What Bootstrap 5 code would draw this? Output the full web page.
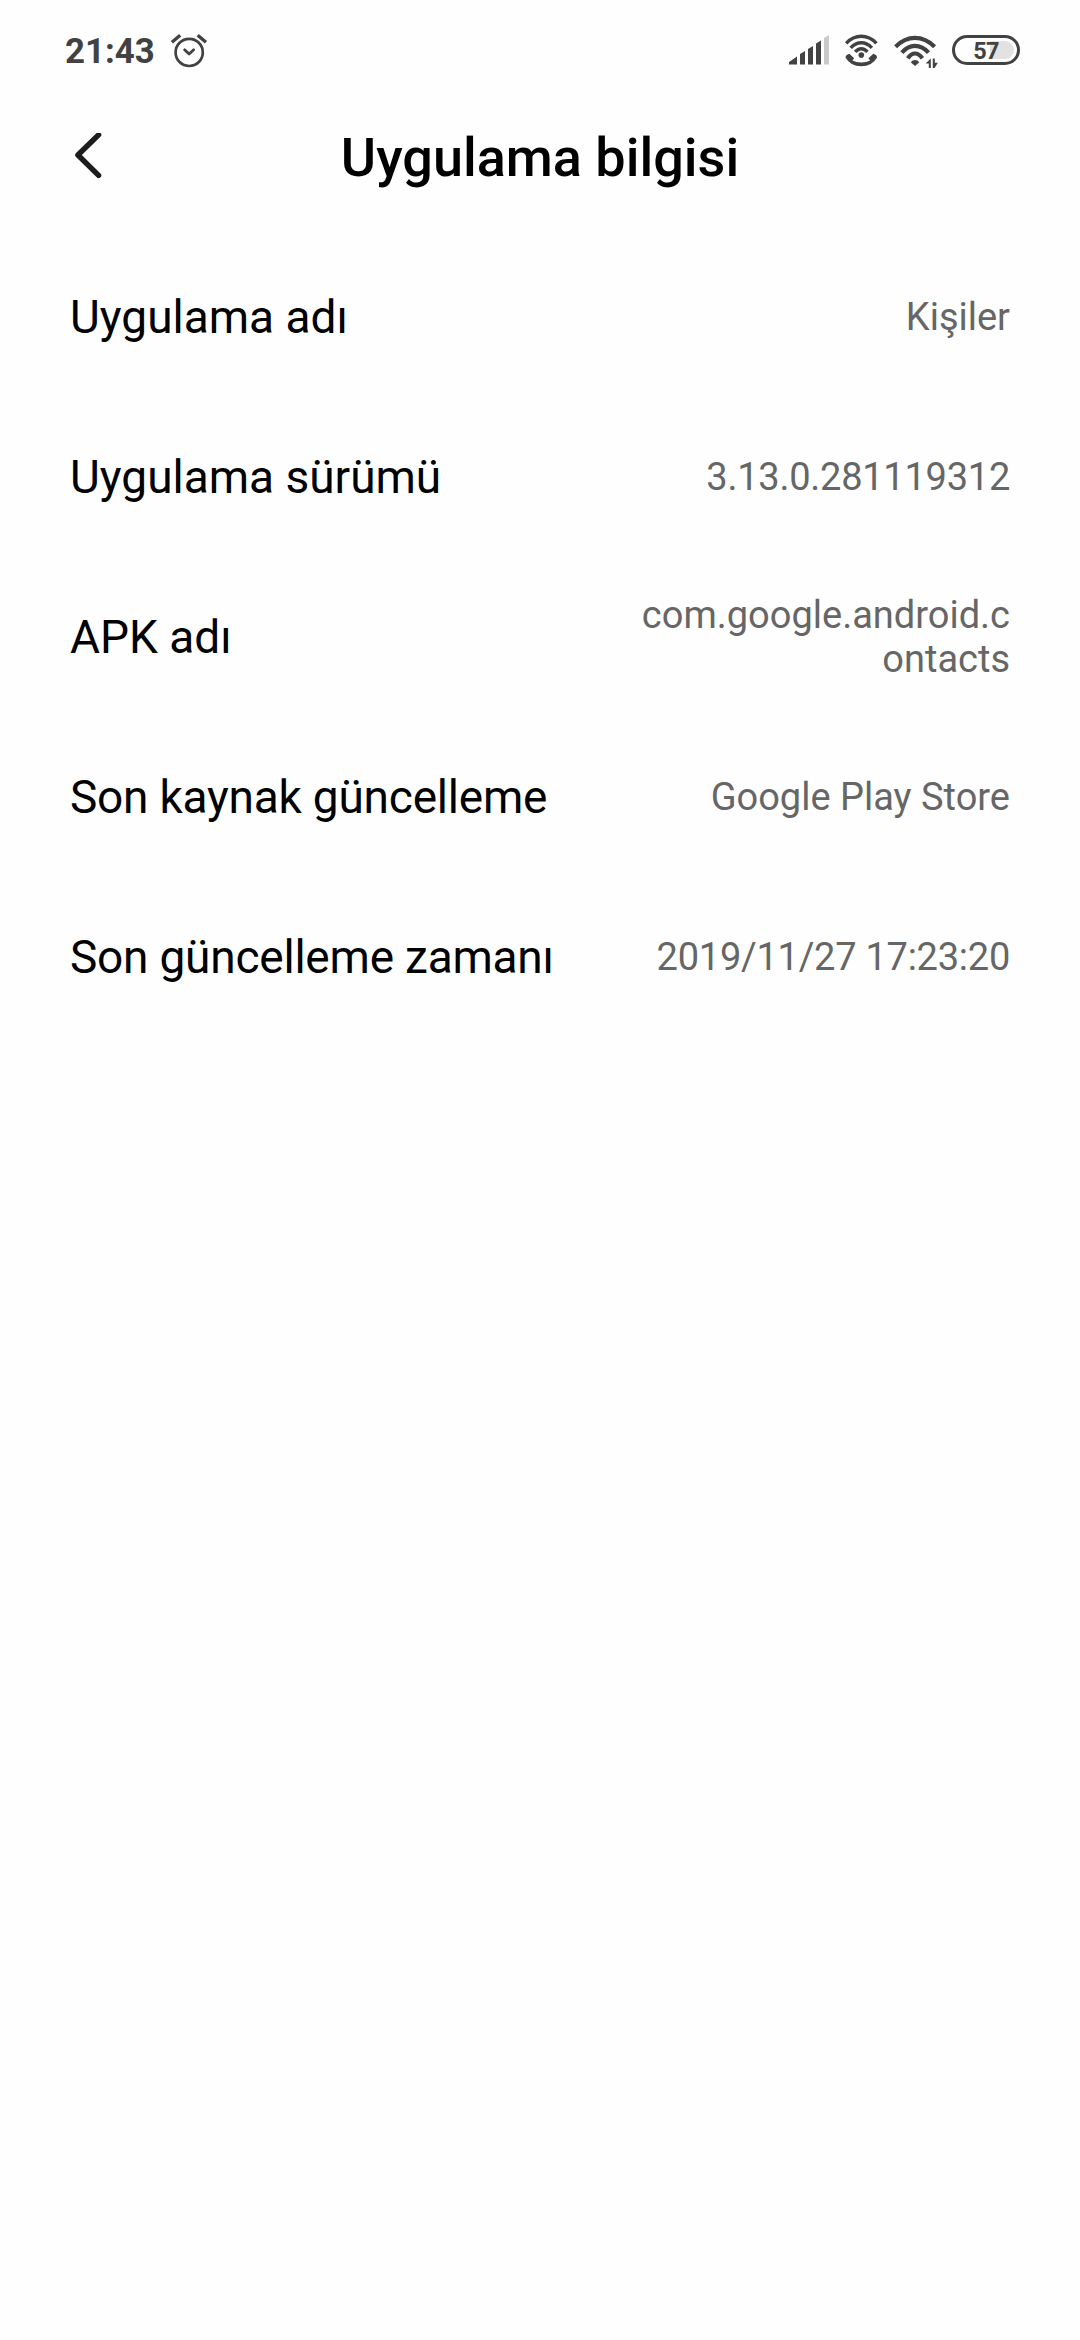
<!DOCTYPE html>
<html lang="tr">
<head>
<meta charset="utf-8">
<meta name="viewport" content="width=device-width, initial-scale=1">
<title>Uygulama bilgisi</title>
<link href="https://cdn.jsdelivr.net/npm/bootstrap@5.3.0/dist/css/bootstrap.min.css" rel="stylesheet">
<style>
  body { font-family: Roboto, "Noto Sans", sans-serif; background: #fefefe; color: #000; min-height: 2340px; }
  svg { display: block; flex: none; }
  .status-bar { height: 103px; padding: 0 60px 0 65px; color: #424242; }
  .clock { font-size: 34.8px; font-weight: 700; line-height: 1; width: 105px; }
  .battery { width: 68px; height: 30px; border: 3px solid #424242; border-radius: 15px; padding: 3px 3px; margin-top: -3px; }
  .battery-level { border-radius: 9px; background: linear-gradient(90deg, transparent 57%, #e2e2e2 57%); font-size: 23.5px; font-weight: 700; line-height: 20px; letter-spacing: -.8px; padding-top: 2px; }
  .title-bar { height: 110px; padding: 0 70px; }
  .title-bar h1 { font-size: 54px; font-weight: 500; line-height: 64px; padding-right: 32px; }
  .details { padding-top: 24px; }
  .detail-row { height: 160px; padding: 0 70px; }
  .detail-label { font-size: 46px; line-height: 54px; white-space: nowrap; }
  .detail-value { font-size: 38px; line-height: 44px; color: #666; width: 370px; word-break: break-all; }
  .snug { letter-spacing: -.22px; }
  .digits { letter-spacing: -.25px; }
</style>
</head>
<body>
<div class="status-bar d-flex align-items-center justify-content-between">
  <div class="d-flex align-items-center">
    <span class="clock">21:43</span>
    <svg width="38" height="36" viewBox="170 33.5 38 36" fill="none" stroke="currentColor" stroke-width="2.7" stroke-linecap="round" stroke-linejoin="round">
      <circle cx="189.2" cy="51.9" r="13.6"/>
      <path d="M184.6 49.3l4.5 4.2 4.6-4.2"/>
      <path stroke-width="3.4" stroke-linecap="butt" d="M171.9 41.8l8.3-7M206 41.8l-8.3-7"/>
    </svg>
  </div>
  <div class="d-flex align-items-center">
    <svg width="164" height="40" viewBox="788 31.5 164 40" fill="none" stroke="currentColor" stroke-linecap="butt">
      <!-- signal strength -->
      <g fill="currentColor" stroke="none">
        <path d="M789 61.5l8-5.5v8h-8zM800 53.5l5-3V64h-5zM808 48.5l5-3V64h-5zM816 43l5-3V64h-5z"/>
        <path fill="#cacaca" d="M824 37.5l5-3V64h-5z"/>
      </g>
      <!-- call over Wi-Fi -->
      <g stroke-width="3.4">
        <path d="M846.2 42.8Q852.8 35.8 861.3 35.8T876.4 42.8"/>
        <path d="M850.7 47.3Q855.3 42.2 861.3 42.2T871.9 47.3"/>
        <path d="M855.2 51.4Q857.8 48.2 861.3 48.2T867.4 51.4"/>
      </g>
      <circle cx="861.3" cy="54.6" r="2.8" fill="currentColor" stroke="none"/>
      <path fill="currentColor" stroke="none" d="M849.3 53.2l4.9 4.5-1.8 2.2q3.8 2 8.9 2t8.9-2l-1.8-2.2 4.9-4.5q3.7 1.4 3.8 3.7-5 8.8-15.8 8.8t-15.8-8.8q.1-2.3 3.8-3.7z"/>
      <!-- Wi-Fi -->
      <g stroke-width="4.2">
        <path d="M895.6 46.2Q904.3 37.3 915 37.3T934.6 46.2"/>
        <path d="M901.9 52.2Q907.5 45.4 915 45.4T928.5 52.2"/>
        <path d="M907.8 57.8Q910.9 53 915 53T922.4 57.8"/>
      </g>
      <path fill="currentColor" stroke="none" d="M910.7 61.8q1.6-2.3 4.3-2.3t4.3 2.3L915 65.6z"/>
      <path fill="currentColor" stroke="none" d="M930.8 58v9.4h-2v-4.5h-3.2zM932.8 58h2v4.2h3l-3.2 5.2h-1.8z"/>
    </svg>
    <div class="battery"><div class="battery-level h-100 d-flex align-items-center justify-content-center">57</div></div>
  </div>
</div>

<header class="title-bar d-flex align-items-center">
  <svg width="32" height="50" viewBox="70 133 32 50" fill="none" stroke="#1c1c1e" stroke-width="5.4" stroke-linecap="round" stroke-linejoin="round" role="img" aria-label="Geri">
    <path d="M98.6 134.8L77.9 155l20.7 20.4"/>
  </svg>
  <h1 class="flex-grow-1 text-center m-0">Uygulama bilgisi</h1>
</header>

<main class="details">
  <div class="detail-row d-flex align-items-center justify-content-between">
    <div class="detail-label">Uygulama adı</div>
    <div class="detail-value text-end">Kişiler</div>
  </div>
  <div class="detail-row d-flex align-items-center justify-content-between">
    <div class="detail-label">Uygulama sürümü</div>
    <div class="detail-value digits text-end">3.13.0.281119312</div>
  </div>
  <div class="detail-row d-flex align-items-center justify-content-between">
    <div class="detail-label">APK adı</div>
    <div class="detail-value text-end">com.google.android.contacts</div>
  </div>
  <div class="detail-row d-flex align-items-center justify-content-between">
    <div class="detail-label snug">Son kaynak güncelleme</div>
    <div class="detail-value text-end">Google Play Store</div>
  </div>
  <div class="detail-row d-flex align-items-center justify-content-between">
    <div class="detail-label snug">Son güncelleme zamanı</div>
    <div class="detail-value digits text-end">2019/11/27 17:23:20</div>
  </div>
</main>
<script src="https://cdn.jsdelivr.net/npm/bootstrap@5.3.0/dist/js/bootstrap.bundle.min.js"></script>
</body>
</html>
